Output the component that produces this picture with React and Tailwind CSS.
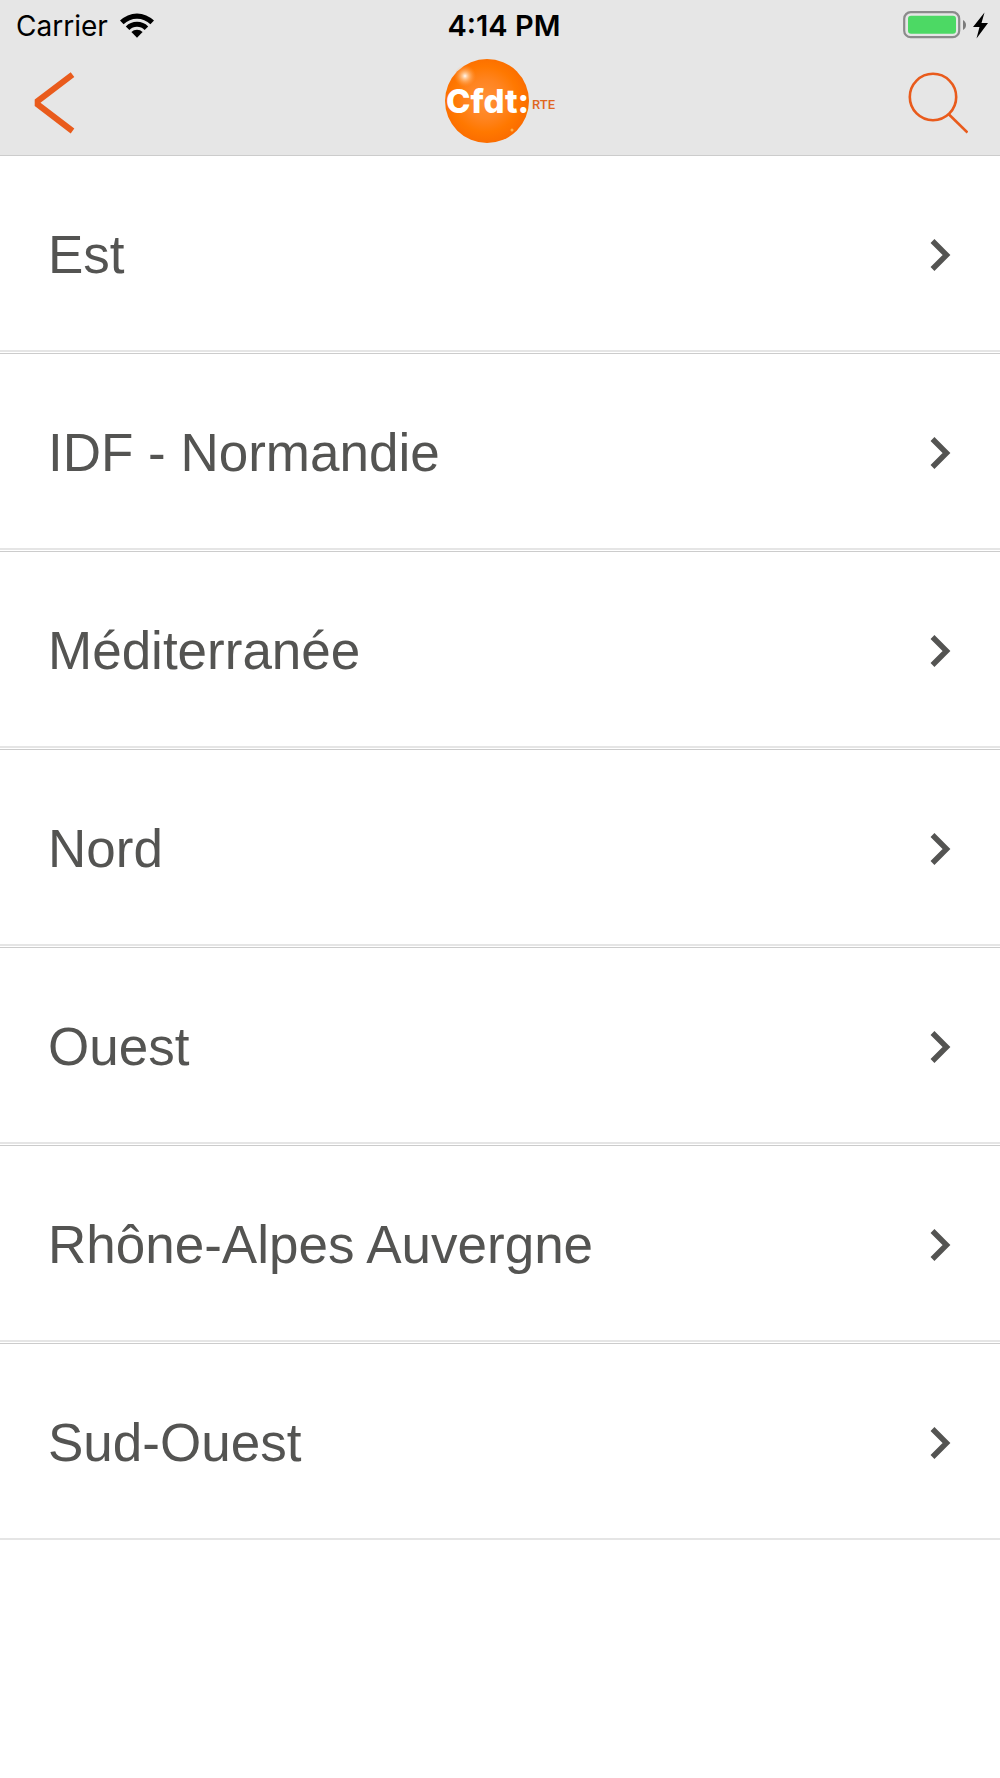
import React from 'react';

const regions = [
    'Est',
    'IDF - Normandie',
    'Méditerranée',
    'Nord',
    'Ouest',
    'Rhône-Alpes Auvergne',
    'Sud-Ouest',
];

const WifiIcon = () => (
    <svg width="34" height="26" viewBox="0 0 34 26" aria-hidden="true">
        <path d="M0 7.6a24 24 0 0 1 34 0l-3.6 3.7a19 19 0 0 0-26.8 0z" />
        <path d="M5.8 13.4a15.9 15.9 0 0 1 22.4 0l-3.6 3.6a10.8 10.8 0 0 0-15.2 0z" />
        <path d="M11.4 19a8 8 0 0 1 11.2 0L17 24.7z" />
    </svg>
);

const BatteryIcon = () => (
    <svg width="89" height="30" viewBox="0 0 89 30" aria-hidden="true">
        <rect x="1.2" y="1.2" width="55" height="25" rx="6.5" fill="none" stroke="#8b8b8b" strokeWidth="2.2" />
        <rect x="5" y="4.7" width="48" height="18" rx="3" fill="#4cd964" />
        <path d="M60 9c4 2 4 8 0 10z" fill="#7b7b7b" />
        <path d="M81.5 1.5L70 16h6.5L73.5 27.500 85 12h-6.500z" fill="#000" />
    </svg>
);

const StatusBar = () => (
    <div className="grid grid-cols-[1fr_auto_1fr] items-center pl-4 pr-2 pt-px h-[50px] font-['Inter',sans-serif] text-[28px] leading-8 text-black">
        <div className="flex items-center gap-3">
            <span>Carrier</span>
            <WifiIcon />
        </div>
        <span className="text-[29px] font-semibold">4:14 PM</span>
        <div className="flex justify-end">
            <BatteryIcon />
        </div>
    </div>
);

const Logo = () => (
    <svg width="112" height="90" viewBox="0 0 112 90" role="img" aria-label="Cfdt: RTE">
        <defs>
            <radialGradient id="ball" cx="0.48" cy="0.48" r="0.52">
                <stop offset="0" stopColor="#ff9138" />
                <stop offset="0.45" stopColor="#ff8420" />
                <stop offset="0.75" stopColor="#ff7800" />
                <stop offset="1" stopColor="#fb6d00" />
            </radialGradient>
            <radialGradient id="shine">
                <stop offset="0" stopColor="#fff" stopOpacity="0.95" />
                <stop offset="0.25" stopColor="#ffe0c0" stopOpacity="0.75" />
                <stop offset="1" stopColor="#ff9a45" stopOpacity="0" />
            </radialGradient>
        </defs>
        <circle cx="43" cy="43" r="42" fill="url(#ball)" />
        <circle cx="21" cy="18" r="11" fill="url(#shine)" />
        <circle cx="68" cy="72" r="1.5" fill="#ffb04a" />
        <text x="2" y="55" fill="#fff" fontSize="33" className="font-['Inter',sans-serif] font-extrabold">Cfdt:</text>
        <text x="88" y="51" fill="#e0661f" fontSize="13" className="font-['Roboto',sans-serif] font-medium">RTE</text>
    </svg>
);

const NavBar = () => (
    <nav className="grid grid-cols-[1fr_auto_1fr] items-center px-8 h-[105px]">
        <button type="button" aria-label="Retour" className="justify-self-start">
            <svg width="44" height="62" viewBox="0 0 44 62" fill="none" stroke="#e95b1c" strokeWidth="6">
                <path d="M40.500 2.700L5.700 29v3.500L40.500 59" />
            </svg>
        </button>
        <Logo />
        <button type="button" aria-label="Rechercher" className="justify-self-end">
            <svg width="60" height="62" viewBox="0 0 60 62" fill="none" stroke="#e95b1c" strokeWidth="2.600">
                <circle cx="25" cy="25" r="23.200" />
                <path d="M40.500 42L59.500 60.500" />
            </svg>
        </button>
    </nav>
);

const RegionRow = ({ name }) => (
    <li className="border-b border-white">
        <a
            href="#"
            className="flex items-center justify-between h-[197px] pl-12 pr-[49px] pt-1 border-t border-t-[#cccccc] border-b-2 border-b-[#e5e5e5] text-[53px] leading-[60px] text-[#545452]"
        >
            <span>{name}</span>
            <svg width="22" height="32" viewBox="0 0 22 32" fill="none" stroke="#545452" strokeWidth="5.500" aria-hidden="true">
                <path d="M3.500 2L17.500 16L3.500 30" />
            </svg>
        </a>
    </li>
);

const App = () => (
    <div className="min-h-screen bg-white font-['Liberation_Sans',Arial,sans-serif]">
        <header className="bg-[#e6e6e6]">
            <StatusBar />
            <NavBar />
        </header>
        <main>
            <ul>
                {regions.map((name) => (
                    <RegionRow key={name} name={name} />
                ))}
            </ul>
        </main>
    </div>
);

export default App;
